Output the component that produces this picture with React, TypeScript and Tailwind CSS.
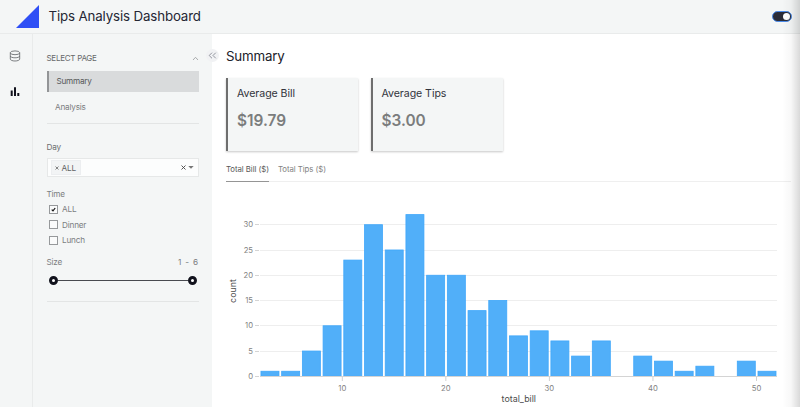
import React from 'react';

const counts = [1, 1, 5, 10, 23, 30, 25, 32, 20, 20, 13, 15, 8, 9, 7, 4, 7, 0, 4, 3, 1, 2, 0, 3, 1];
const yTicks = [0, 5, 10, 15, 20, 25, 30];
const xTicks = [10, 20, 30, 40, 50];

// Pixel scales of the plot; its origin is the top left corner of the chart svg.
const yAt = (v: number) => 194 - v * 5.053;
const xAt = (v: number) => 130.3 + (v - 10) * 10.355;

function Histogram() {
  return (
    <svg width="588" height="225" viewBox="0 0 588 225" className="block font-[Inter,sans-serif]">
      {yTicks.map((t) => {
        const y = Math.round(yAt(t)) + 0.5;
        return (
          <g key={t}>
            {t > 0 && <line x1="48" x2="565" y1={y} y2={y} stroke="#eeeeee" />}
            <line x1="43" x2="47" y1={y} y2={y} stroke="#d4d4d4" />
            <text x="41" y={yAt(t) + 3} textAnchor="end" fontSize="7.7" fill="#828282">{t}</text>
          </g>
        );
      })}
      {counts.map((c, i) =>
        c ? (
          <rect key={i} x={xAt(2 + i * 2) + 1.5} y={yAt(c) + 0.3} width="18" height={194 - yAt(c)} fill="#51aff9" stroke="#3fa7fa" strokeWidth="0.8" />
        ) : null,
      )}
      <line x1="48" x2="565" y1="194.5" y2="194.5" stroke="#d4d4d4" />
      {xTicks.map((t) => (
        <g key={t}>
          <line x1={xAt(t)} x2={xAt(t)} y1="195" y2="199" stroke="#d0d0d0" />
          <text x={xAt(t)} y="208.5" textAnchor="middle" fontSize="7.7" fill="#828282">{t}</text>
        </g>
      ))}
      <text x="306.8" y="220.3" textAnchor="middle" fontSize="8.9" fill="#4c4c4c">total_bill</text>
      <text transform="translate(24.3 109) rotate(-90)" textAnchor="middle" fontSize="8.9" fill="#4c4c4c">count</text>
    </svg>
  );
}

function Metric({ title, value }: { title: string; value: string }) {
  return (
    <div className="h-[73px] w-[132px] border-l-2 border-[#6e6e6e] bg-[#f4f6f6] pl-[9px] shadow-[0_1px_2px_rgba(0,0,0,0.22)]">
      <div className="mt-[8px] h-[15px] text-[10.6px] leading-[15px] tracking-[-0.06px] text-[#32343c]">{title}</div>
      <div className="mt-[10px] text-[15.4px] leading-[20px] font-semibold text-[#7b7d7d]">{value}</div>
    </div>
  );
}

function Check({ label, checked = false }: { label: string; checked?: boolean }) {
  return (
    <div className="flex h-[15.6px] items-center gap-[4.5px] pl-[2px] text-[8.2px]">
      <span className="flex size-[9px] items-center justify-center border border-[#96999b] bg-white/50">
        {checked && (
          <svg width="5" height="5" viewBox="0 0 5 5"><path d="M.7 2.6 2 3.8 4.2 1" fill="none" stroke="#111" strokeWidth="1.2" /></svg>
        )}
      </span>
      {label}
    </div>
  );
}

function Knob() {
  return <span className="size-[9px] rounded-full border-[3px] border-[#11121c] bg-white" />;
}

export default function App() {
  return (
    <div className="relative flex h-[407px] w-[800px] flex-col overflow-hidden bg-white font-[Inter,sans-serif]">
      <header className="flex h-[34px] shrink-0 items-center border-b border-[#e9ebeb] bg-[#f4f6f6] pr-[8.5px] pl-4">
        <svg width="23" height="23" viewBox="0 0 23 23"><path d="M23 0V23H0Z" fill="#2f4ff5" /></svg>
        <h1 className="ml-[9.5px] text-[13.3px] tracking-[-0.14px] text-[#252634]">Tips Analysis Dashboard</h1>
        <span className="ml-auto flex h-[11px] w-[20px] items-center justify-end rounded-full border border-[#4b8bea] bg-[#2a2c38] pr-px">
          <span className="size-[7px] rounded-full bg-white" />
        </span>
      </header>
      <div className="flex min-h-0 flex-1">
        <nav className="flex w-[33px] shrink-0 flex-col items-center border-r border-[#e9ebeb] bg-[#f4f6f6] pt-[16px] pr-[2px]">
          <svg width="12" height="12" viewBox="0 0 12 12" fill="none" stroke="#66696d" strokeWidth="0.85">
            <ellipse cx="6" cy="2.8" rx="4.7" ry="1.9" />
            <path d="M1.3 2.8v6.3c0 1 2.1 1.9 4.7 1.9s4.7-.9 4.7-1.9V2.8M1.3 6c0 1 2.1 1.8 4.7 1.8S10.7 7 10.7 6" />
          </svg>
          <svg width="10" height="10" viewBox="0 0 10 10" className="mt-[24.5px]" fill="#11121c">
            <path d="M.7 3.5h2V9h-2zM4 .3h2V9H4zM7.3 6h2v3h-2z" />
          </svg>
        </nav>
        <aside className="w-[179px] shrink-0 bg-[#f4f6f6] pr-[13px] pl-[13.5px] text-[8.2px] leading-[12px] text-[#7b7d7f]">
          <div className="mt-[18px] flex items-center justify-between text-[#666869]">
            <span className="text-[8px] tracking-[-0.27px]">SELECT PAGE</span>
            <svg width="7" height="5" viewBox="0 0 7 5" fill="none" stroke="#a0a3a5" strokeWidth="0.9"><path d="m1 4 2.5-2.7L6 4" /></svg>
          </div>
          <div className="mt-[7px] flex h-[20.5px] items-center border-l-2 border-[#939597] bg-[#d9dbdc] pl-[8px] tracking-[-0.25px] text-[#555759]">Summary</div>
          <div className="mt-[9px] pl-[8.5px] tracking-[-0.2px]">Analysis</div>
          <div className="mt-[10.5px] h-px bg-[#e3e5e5]" />
          <div className="mt-[17px] tracking-[-0.2px] text-[#6c6e70]">Day</div>
          <div className="mt-[5px] flex h-[19px] items-center border border-[#e6e8e8] bg-[#fcfdfd] pr-[4px] pl-[3px]">
            <span className="flex h-[15px] items-center gap-[3px] border border-[#eceef0] bg-[#f2f4f5] pr-[4px] pl-[3px] tracking-[-0.2px] text-[#606264]">
              <svg width="4" height="4" viewBox="0 0 4 4" stroke="#555" strokeWidth="0.7"><path d="m.5.5 3 3m0-3-3 3" /></svg>
              ALL
            </span>
            <svg width="5" height="5" viewBox="0 0 5 5" className="ml-auto" stroke="#444" strokeWidth="0.9"><path d="m.5.5 4 4m0-4-4 4" /></svg>
            <svg width="6" height="3" viewBox="0 0 6 3" className="ml-[2px]"><path d="M.3 0h5.4L3 2.8Z" fill="#777" /></svg>
          </div>
          <div className="mt-[11px] tracking-[-0.2px]">Time</div>
          <div className="mt-[1.5px] tracking-[-0.2px]">
            <Check label="ALL" checked />
            <Check label="Dinner" />
            <Check label="Lunch" />
          </div>
          <div className="mt-[8px] flex justify-between pr-[1px]">
            <span className="tracking-[-0.2px]">Size</span>
            <span className="[word-spacing:1.6px]">1 - 6</span>
          </div>
          <div className="mt-[8px] flex h-[9px] items-center pr-[2px] pl-[2px]">
            <Knob />
            <span className="h-px flex-1 bg-[#484a50]" />
            <Knob />
          </div>
          <div className="mt-[15.5px] h-px bg-[#e3e5e5]" />
        </aside>
        <main className="min-w-0 flex-1">
          <h2 className="mt-[12px] ml-[14px] h-[20px] text-[13.3px] leading-[20px] tracking-[-0.18px] text-[#20212a]">Summary</h2>
          <div className="mt-[12px] ml-[14px] flex gap-[12.5px]">
            <Metric title="Average Bill" value="$19.79" />
            <Metric title="Average Tips" value="$3.00" />
          </div>
          <div className="mt-[10px] mr-[9px] ml-[14px] flex h-[21px] gap-[9px] border-b border-[#efefef] text-[7.8px] leading-[17px] tracking-[-0.06px] text-[#828282]">
            <span className="h-[21px] border-b border-[#959595] text-[#585858]">Total Bill ($)</span>
            <span>Total Tips ($)</span>
          </div>
          <Histogram />
        </main>
      </div>
      <button className="absolute top-[49px] left-[206px] flex size-[13px] items-center justify-center rounded-full bg-[#f1f2f4]">
        <svg width="9" height="7" viewBox="0 0 9 7" fill="none" stroke="#888b95" strokeWidth="0.9"><path d="M4 .7 1.2 3.5 4 6.3M7.8.7 5 3.5l2.8 2.8" /></svg>
      </button>
      <div className="pointer-events-none absolute inset-y-0 right-0 w-[18px] bg-linear-to-r from-transparent via-black/3 to-black/15" />
    </div>
  );
}
